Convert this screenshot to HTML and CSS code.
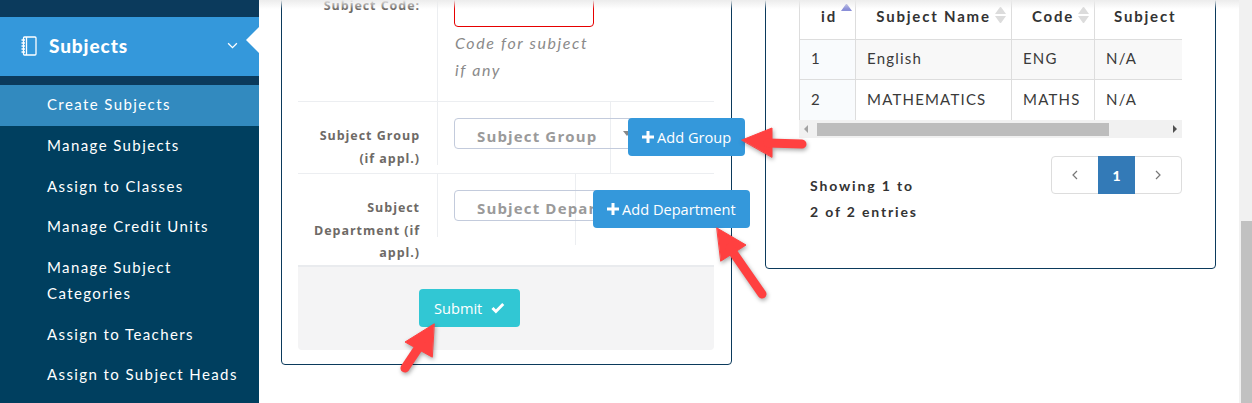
FILE: index.html
```html
<!DOCTYPE html>
<html lang="en">
<head>
    <meta charset="UTF-8">
    <meta name="viewport" content="width=device-width, initial-scale=1.0">
    <title>Create Subjects</title>
    <link rel="stylesheet" href="styles.css">
</head>
<body>
    <div class="layout">
        <aside class="sidebar">
            <div class="nav-head">
                <svg class="nav-icon" viewBox="0 0 16 20" width="16" height="20" fill="none" stroke="#fff" stroke-width="1.3">
                    <rect x="2.5" y="1" width="12.5" height="18" rx="1"/>
                    <path d="M5.5 1v18M.5 4h3.5M.5 7h3.5M.5 10h3.5M.5 13h3.5M.5 16h3.5"/>
                </svg>
                <span class="nav-title">Subjects</span>
                <svg class="nav-chevron" viewBox="0 0 12 8" width="11" height="7" fill="none" stroke="#fff" stroke-width="1.5"><path d="M1 1.5l5 5 5-5"/></svg>
            </div>
            <ul class="submenu">
                <li class="active">Create Subjects</li>
                <li>Manage Subjects</li>
                <li>Assign to Classes</li>
                <li>Manage Credit Units</li>
                <li>Manage Subject Categories</li>
                <li>Assign to Teachers</li>
                <li>Assign to Subject Heads</li>
            </ul>
        </aside>

        <main class="main">
            <div class="top-shade"></div>

            <section class="card form-card">
                <div class="form-row">
                    <div class="row-label first-label">Subject Code:</div>
                    <div class="code-control">
                        <div class="code-input"></div>
                        <p class="help-text">Code for subject if any</p>
                    </div>
                </div>
                <div class="form-row group-row">
                    <div class="row-label">Subject Group (if appl.)</div>
                    <div class="select-cell">
                        <div class="select-inner">
                            <div class="select-box">Subject Group<span class="select-caret"></span></div>
                        </div>
                    </div>
                    <button class="add-btn" type="button">
                        <svg viewBox="0 0 12 12" width="12" height="12" fill="#fff"><path d="M4.5 0h3v4.500h4.500v3h-4.500v4.500h-3v-4.500h-4.500v-3h4.500z"/></svg>Add Group
                    </button>
                </div>
                <div class="form-row dept-row">
                    <div class="row-label">Subject Department (if appl.)</div>
                    <div class="select-cell">
                        <div class="select-inner">
                            <div class="select-box">Subject Department<span class="select-caret"></span></div>
                        </div>
                    </div>
                    <button class="add-btn" type="button">
                        <svg viewBox="0 0 12 12" width="12" height="12" fill="#fff"><path d="M4.5 0h3v4.500h4.500v3h-4.500v4.500h-3v-4.500h-4.500v-3h4.500z"/></svg>Add Department
                    </button>
                </div>
                <div class="form-footer">
                    <button class="submit-btn" type="button">Submit
                        <svg viewBox="0 0 14 12" width="14" height="12" fill="none" stroke="#fff" stroke-width="3"><path d="M1.500 6l3.500 3.500 7.500-7.500"/></svg>
                    </button>
                </div>
            </section>

            <section class="card table-card">
                <div class="table-wrap">
                    <table class="subject-table">
                        <thead>
                            <tr>
                                <th class="sorted">id<span class="sort-arrows"><i class="up"></i></span></th>
                                <th>Subject Name<span class="sort-arrows"><i class="up"></i><i class="down"></i></span></th>
                                <th>Code<span class="sort-arrows"><i class="up"></i><i class="down"></i></span></th>
                                <th>Subject</th>
                            </tr>
                        </thead>
                        <tbody>
                            <tr class="odd"><td>1</td><td>English</td><td>ENG</td><td>N/A</td></tr>
                            <tr><td>2</td><td>MATHEMATICS</td><td>MATHS</td><td>N/A</td></tr>
                        </tbody>
                    </table>
                    <div class="h-scroll">
                        <span class="h-arrow left"></span>
                        <div class="h-thumb"></div>
                        <span class="h-arrow right"></span>
                    </div>
                </div>
                <div class="table-foot">
                    <div class="table-info">Showing 1 to 2 of 2 entries</div>
                    <ul class="pagination">
                        <li><svg viewBox="0 0 6 10" width="6" height="10" fill="none" stroke="#777" stroke-width="1.2"><path d="M5 1L1 5l4 4"/></svg></li>
                        <li class="current">1</li>
                        <li><svg viewBox="0 0 6 10" width="6" height="10" fill="none" stroke="#777" stroke-width="1.2"><path d="M1 1l4 4-4 4"/></svg></li>
                    </ul>
                </div>
            </section>

            <!-- red annotation arrows drawn over the screenshot -->
            <svg class="arrows" viewBox="0 0 1252 403" width="1252" height="403">
                <g fill="#ff4040" stroke="#ff4040" stroke-linecap="round" stroke-linejoin="round">
                    <path d="M742 140L772 128V157Z" stroke-width="1"/>
                    <path d="M768 143L802 144" stroke-width="9" fill="none"/>
                    <path d="M717 228L746 245L721 261Z" stroke-width="1"/>
                    <path d="M730 248L762 294" stroke-width="9" fill="none"/>
                    <path d="M434 324L405 342L432 357Z" stroke-width="1"/>
                    <path d="M421 344L405 368" stroke-width="9" fill="none"/>
                </g>
            </svg>
        </main>

        <div class="page-scroll"><div class="page-thumb"></div></div>
    </div>
</body>
</html>
```
FILE: styles.css
```css
* {
    box-sizing: border-box;
}
body {
    margin: 0;
    font-family: Lato, "Open Sans", sans-serif;
    color: #333;
    background-color: #fff;
}
.layout {
    display: flex;
    height: 403px;
    overflow: hidden;
}

/* sidebar */
.sidebar {
    width: 259px;
    flex: none;
    padding-top: 17px;
    background-color: #0b3a5c;
}
.nav-head {
    position: relative;
    display: flex;
    align-items: center;
    height: 59px;
    padding: 0 21px 2px 21px;
    background-color: #3498db;
    color: #fff;
}
.nav-head::after {
    content: "";
    position: absolute;
    right: 0;
    top: 10px;
    border-style: solid;
    border-width: 13px 13px 13px 0;
    border-color: transparent #fff transparent transparent;
}
.nav-title {
    flex: 1;
    margin-left: 12px;
    font-size: 19px;
    font-weight: 900;
    letter-spacing: 0.9px;
}
.submenu {
    list-style: none;
    margin: 9px 0 0;
    padding: 0;
    height: 320px;
    background-color: #003f5f;
}
.submenu li {
    padding: 6.33px 20px 8.33px 47px;
    font-size: 15px;
    line-height: 26px;
    letter-spacing: 1.4px;
    color: #fff;
}
.submenu .active {
    background-color: #328abf;
}

/* main area */
.main {
    position: relative;
    flex: 1;
    display: flex;
    align-items: flex-start;
    gap: 33px;
    padding: 0 23px 0 22px;
}
.top-shade {
    position: absolute;
    left: 0;
    right: 0;
    top: 0;
    height: 9px;
    background: linear-gradient(#ececec, rgba(255,255,255,0));
    z-index: 2;
}
.arrows {
    position: absolute;
    left: -259px;
    top: 0;
    z-index: 5;
    filter: drop-shadow(1px 2px 2px rgba(0,0,0,0.35));
}
.card {
    width: 451px;
    flex: none;
    margin-top: -21px;
    background-color: #fff;
    border: 1px solid #0b3a5c;
    border-radius: 4px;
}

/* form */
.form-card {
    padding: 0 17px 14px 16px;
}
.form-row {
    display: flex;
    align-items: flex-start;
    border-bottom: 1px solid #eceef1;
}
.row-label {
    width: 139px;
    flex: none;
    padding: 23px 17px 3px 15px;
    text-align: right;
    font-family: "Open Sans", sans-serif;
    font-size: 12.5px;
    font-weight: 700;
    line-height: 22.5px;
    letter-spacing: 0.95px;
    color: #6e6a66;
}
.first-label {
    padding-top: 15px;
}
.code-control {
    height: 121px;
    flex: 1;
    padding: 16px 16px 0;
    border-left: 1px solid #eceef1;
}
.code-input {
    width: 140px;
    height: 31px;
    border: 1px solid #e60000;
    border-radius: 4px;
}
.help-text {
    width: 140px;
    margin: 2px 0 0 1px;
    font-size: 16px;
    font-style: italic;
    line-height: 27px;
    letter-spacing: 1.6px;
    color: #8a8a8a;
}
.select-cell {
    height: 71px;
    flex: none;
    border-right: 1px solid #eceef1;
}
.group-row .select-cell {
    width: 174px;
}
.dept-row {
    border-bottom: 0;
}
.dept-row .select-cell {
    width: 139px;
}
.dept-row .row-label {
    padding-bottom: 0.5px;
}
.select-inner {
    height: 63px;
    padding: 16px 0 0 16px;
    border-left: 1px solid #eceef1;
}
.select-box {
    position: relative;
    width: 200px;
    height: 31px;
    padding-left: 22px;
    border: 1px solid #c3cbdc;
    border-radius: 4px;
    font-family: "Open Sans", sans-serif;
    font-size: 15px;
    font-weight: 700;
    line-height: 34px;
    letter-spacing: 1.15px;
    white-space: nowrap;
    overflow: hidden;
    color: #9a9a9a;
}
.select-caret {
    position: absolute;
    left: 168px;
    top: 12px;
    border-style: solid;
    border-width: 5px 4px 0;
    border-color: #888 transparent transparent;
}
.add-btn,
.submit-btn {
    display: flex;
    align-items: center;
    height: 38px;
    border: none;
    border-radius: 4px;
    font-family: "Open Sans", sans-serif;
    font-size: 14.6px;
    color: #fff;
}
.add-btn {
    position: relative;
    z-index: 1;
    flex: none;
    gap: 3px;
    margin: 16px 0 0 17px;
    padding: 0 14px;
    background-color: #3498db;
}
.form-footer {
    height: 85px;
    padding: 22px 0 0 121px;
    border-top: 2px solid #e9ebee;
    border-radius: 0 0 4px 4px;
    background-color: #f4f4f5;
}
.submit-btn {
    width: 101px;
    gap: 9px;
    padding: 0 15px;
    background-color: #31c7d4;
}

/* table */
.table-card {
    padding: 10px 33px 43px;
}
.table-wrap {
    overflow: hidden;
}
.subject-table {
    width: 383px;
    table-layout: fixed;
    border-collapse: collapse;
    font-size: 15px;
    letter-spacing: 1.2px;
}
.subject-table th:nth-child(1) { width: 56px; }
.subject-table th:nth-child(2) { width: 156px; }
.subject-table th:nth-child(3) { width: 83px; }
.subject-table th:nth-child(4) { width: 88px; }
.subject-table th {
    height: 49px;
    padding: 0 0 14px 15px;
    border-right: 1px solid #ddd;
    border-bottom: 1px solid #ddd;
    vertical-align: bottom;
    text-align: center;
    white-space: nowrap;
    overflow: hidden;
    font-weight: 700;
    letter-spacing: 1.8px;
}
.subject-table th:nth-child(1) {
    padding-left: 18px;
}
.subject-table th:nth-child(4) {
    padding: 0 0 14px 19px;
    text-align: left;
}
.subject-table td {
    height: 40.500px;
    padding: 0 11px 2px;
    border-right: 1px solid #ddd;
    border-bottom: 1px solid #ddd;
    white-space: nowrap;
    color: #3a3a3a;
}
.subject-table th:first-child,
.subject-table td:first-child {
    border-left: 1px solid #ddd;
}
.subject-table td:first-child {
    background-color: #f9fbfd;
}
.subject-table tr:last-child td {
    border-bottom: 0;
}
.odd td {
    background-color: #f8f8f8;
}
.sort-arrows {
    display: inline-block;
    width: 11px;
    height: 18px;
    margin-left: 4px;
    vertical-align: -3px;
}
.sort-arrows i {
    display: block;
    margin-bottom: 2px;
    border-style: solid;
    border-color: transparent;
}
.sort-arrows .up {
    border-width: 0 5px 7px;
    border-bottom-color: #dcdcdc;
}
.sort-arrows .down {
    border-width: 7px 5px 0;
    border-top-color: #dcdcdc;
}
.sorted .sort-arrows {
    vertical-align: 0;
}
.sorted .sort-arrows .up {
    border-bottom-color: #8a8fd8;
}
.h-scroll {
    display: flex;
    align-items: center;
    justify-content: space-between;
    position: relative;
    height: 18px;
    padding: 0 5px;
    background-color: #f1f1f1;
}
.h-thumb {
    position: absolute;
    left: 18px;
    top: 3px;
    width: 292px;
    height: 13px;
    background-color: #bdbdbd;
}
.h-arrow {
    border-style: solid;
    border-color: transparent;
}
.h-arrow.left {
    border-width: 4px 4px 4px 0;
    border-right-color: #a3a3a3;
}
.h-arrow.right {
    border-width: 4px 0 4px 4px;
    border-left-color: #505050;
}
.table-foot {
    display: flex;
    justify-content: space-between;
    align-items: flex-start;
    margin-top: 18px;
}
.table-info {
    width: 112px;
    margin: 17px 0 0 11px;
    font-size: 14px;
    font-weight: 700;
    line-height: 26px;
    letter-spacing: 1.85px;
}
.pagination {
    display: flex;
    list-style: none;
    margin: 0;
    padding: 0;
    height: 38px;
    border: 1px solid #ddd;
    border-radius: 4px;
}
.pagination li {
    display: flex;
    align-items: center;
    justify-content: center;
    width: 46px;
}
.pagination .current {
    width: 37px;
    margin: -1px 0;
    font-size: 14px;
    font-weight: 900;
    color: #fff;
    background-color: #337ab7;
}

/* browser scrollbar */
.page-scroll {
    width: 13px;
    flex: none;
    padding-top: 221px;
    background-color: #f1f1f1;
}
.page-thumb {
    height: 182px;
    margin-left: 2px;
    background-color: #c1c1c1;
}
```
